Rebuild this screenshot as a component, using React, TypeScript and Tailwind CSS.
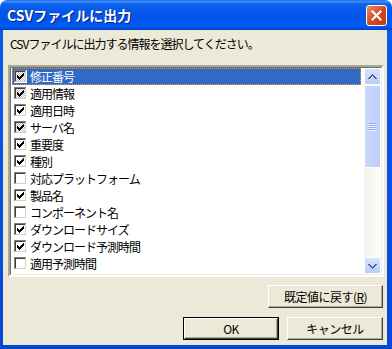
import React from "react";

const items = [
  { label: "修正番号", checked: true, gray: true },
  { label: "適用情報", checked: true, gray: true },
  { label: "適用日時", checked: true, gray: false },
  { label: "サーバ名", checked: true, gray: true },
  { label: "重要度", checked: true, gray: false },
  { label: "種別", checked: true, gray: false },
  { label: "対応プラットフォーム", checked: false, gray: false },
  { label: "製品名", checked: true, gray: false },
  { label: "コンポーネント名", checked: false, gray: false },
  { label: "ダウンロードサイズ", checked: true, gray: false },
  { label: "ダウンロード予測時間", checked: true, gray: false },
  { label: "適用予測時間", checked: false, gray: false },
  { label: "修正形態", checked: false, gray: false },
];

// classic check mark, one 3px column per x
const checkCols = [5, 6, 7, 6, 5, 4, 3];

function CheckBox({ checked, gray }: { checked: boolean; gray: boolean }) {
  return (
    <svg width="13" height="13" viewBox="0 0 13 13" shapeRendering="crispEdges" className="shrink-0">
      <defs>
        <pattern id="dith" width="2" height="2" patternUnits="userSpaceOnUse">
          <rect width="2" height="2" fill="#fff" />
          <rect width="1" height="1" fill="#c0c0c0" />
          <rect x="1" y="1" width="1" height="1" fill="#c0c0c0" />
        </pattern>
      </defs>
      <rect width="13" height="13" fill="#fff" />
      <rect width="12" height="1" fill="#808080" />
      <rect width="1" height="12" fill="#808080" />
      <rect x="1" y="1" width="11" height="11" fill="#d4d0c8" />
      <rect x="1" y="1" width="10" height="1" fill="#404040" />
      <rect x="1" y="1" width="1" height="10" fill="#404040" />
      <rect x="2" y="2" width="9" height="9" fill={gray ? "url(#dith)" : "#fff"} />
      {checked &&
        checkCols.map((y, i) => <rect key={i} x={3 + i} y={y} width="1" height="3" fill="#000" />)}
    </svg>
  );
}

function ScrollButton({ up }: { up: boolean }) {
  return (
    <div className="h-[17px] w-[17px] rounded-[2px] border border-white bg-[linear-gradient(to_bottom,#D7E3FE,#BACCF8)] flex items-center justify-center shrink-0">
      <svg width="9" height="6" viewBox="0 0 9 6" shapeRendering="crispEdges">
        {up ? (
          <path d="M0 4h2v1H0zM1 3h2v1H1zM2 2h2v1H2zM3 1h3v1H3zM4 0h1v1H4zM5 2h2v1H5zM6 3h2v1H6zM7 4h2v1H7z" fill="#4D6185" />
        ) : (
          <path d="M0 1h2v1H0zM1 2h2v1H1zM2 3h2v1H2zM3 4h3v1H3zM4 5h1v1H4zM5 3h2v1H5zM6 2h2v1H6zM7 1h2v1H7z" fill="#4D6185" />
        )}
      </svg>
    </div>
  );
}

function Button({ children, def, w }: { children: React.ReactNode; def?: boolean; w: string }) {
  return (
    <div className={`${w} h-[23px] ${def ? "border border-black" : ""}`}>
      <div className="h-full w-full border border-t-white border-l-white border-r-[#404040] border-b-[#404040] bg-[#ECE9D8] shadow-[inset_-1px_-1px_#ACA899] flex items-center justify-center text-[12px] leading-[12px] tracking-[-0.5px] text-black">
        {children}
      </div>
    </div>
  );
}

export default function App() {
  return (
    <div className="w-[392px] h-[349px] bg-white font-['Noto_Sans_CJK_JP',sans-serif] flex flex-col">
      {/* title bar */}
      <div className="h-[30px] rounded-t-[7px] bg-[linear-gradient(to_bottom,#1C6CF0_0%,#3D8AF7_5%,#0A62EC_14%,#0256E8_45%,#0055EA_65%,#005CF6_85%,#0050E0_95%,#0039B5_100%)] flex items-center justify-between pl-[7px] pr-[5px] shrink-0">
        <span className="text-white text-[14px] font-bold leading-[14px] [text-shadow:1px_1px_#0A1883]">
          CSVファイルに出力
        </span>
        <div className="w-[21px] h-[21px] rounded-[3px] border border-white bg-[linear-gradient(135deg,#E98B6C,#D3461F_55%,#BF3A17)] flex items-center justify-center">
          <svg width="11" height="11" viewBox="0 0 11 11">
            <path d="M1.5 1.5 L9.5 9.5 M9.5 1.5 L1.5 9.5" stroke="#fff" strokeWidth="2.2" strokeLinecap="square" />
          </svg>
        </div>
      </div>

      {/* frame + body */}
      <div className="flex-1 bg-[linear-gradient(to_bottom,#0A5AEE,#0747D6)] pl-[3px] pr-[5px] pb-[4px] flex">
        <div className="flex-1 bg-[#ECE9D8] flex flex-col">
          <div className="pl-[7px] pt-[8px] text-[12px] leading-[12px] tracking-[-1px] text-black">
            CSVファイルに出力する情報を選択してください。
          </div>

          {/* list box */}
          <div className="mt-[15px] ml-[5px] mr-[3px] h-[212px] border-2 border-t-[#ACA899] border-l-[#ACA899] border-r-white border-b-white">
            <div className="h-full w-full border border-t-[#716F64] border-l-[#716F64] border-r-[#F1EFE2] border-b-[#F1EFE2] bg-white flex">
              <div className="flex-1 overflow-hidden pl-[1px] pr-[3px]">
                {items.map((it, i) => (
                  <div
                    key={i}
                    className={`h-[17px] flex items-center gap-[3px] pl-[1px] text-[12px] leading-[12px] tracking-[-1px] ${
                      i === 0
                        ? "bg-[#316AC5] text-white border border-dotted border-[#E0A23C]"
                        : "text-black border border-transparent"
                    }`}
                  >
                    <CheckBox checked={it.checked} gray={it.gray} />
                    <span>{it.label}</span>
                  </div>
                ))}
              </div>
              {/* scroll bar */}
              <div className="w-[17px] bg-[linear-gradient(to_right,#F3F1EC,#FEFEFB)] flex flex-col">
                <ScrollButton up />
                <div className="h-[83px] w-[17px] rounded-[2px] border border-white bg-[linear-gradient(to_right,#C9D8FC,#BCCEFA)] flex flex-col items-center justify-center gap-[1px]">
                  <div className="w-[7px] h-[1px] bg-[#8DAEF7] shadow-[0_1px_#EEF4FE]" />
                  <div className="w-[7px] h-[1px] bg-[#8DAEF7] shadow-[0_1px_#EEF4FE]" />
                  <div className="w-[7px] h-[1px] bg-[#8DAEF7] shadow-[0_1px_#EEF4FE]" />
                  <div className="w-[7px] h-[1px] bg-[#8DAEF7] shadow-[0_1px_#EEF4FE]" />
                </div>
                <div className="flex-1" />
                <ScrollButton up={false} />
              </div>
            </div>
          </div>

          <div className="mt-[8px] mr-[4px] flex justify-end">
            <Button w="w-[115px]">
              既定値に戻す(<span className="underline">R</span>)
            </Button>
          </div>
          <div className="mt-[9px] mr-[4px] flex justify-end gap-[8px]">
            <Button w="w-[96px]" def>
              OK
            </Button>
            <Button w="w-[96px]">キャンセル</Button>
          </div>
        </div>
      </div>
    </div>
  );
}
